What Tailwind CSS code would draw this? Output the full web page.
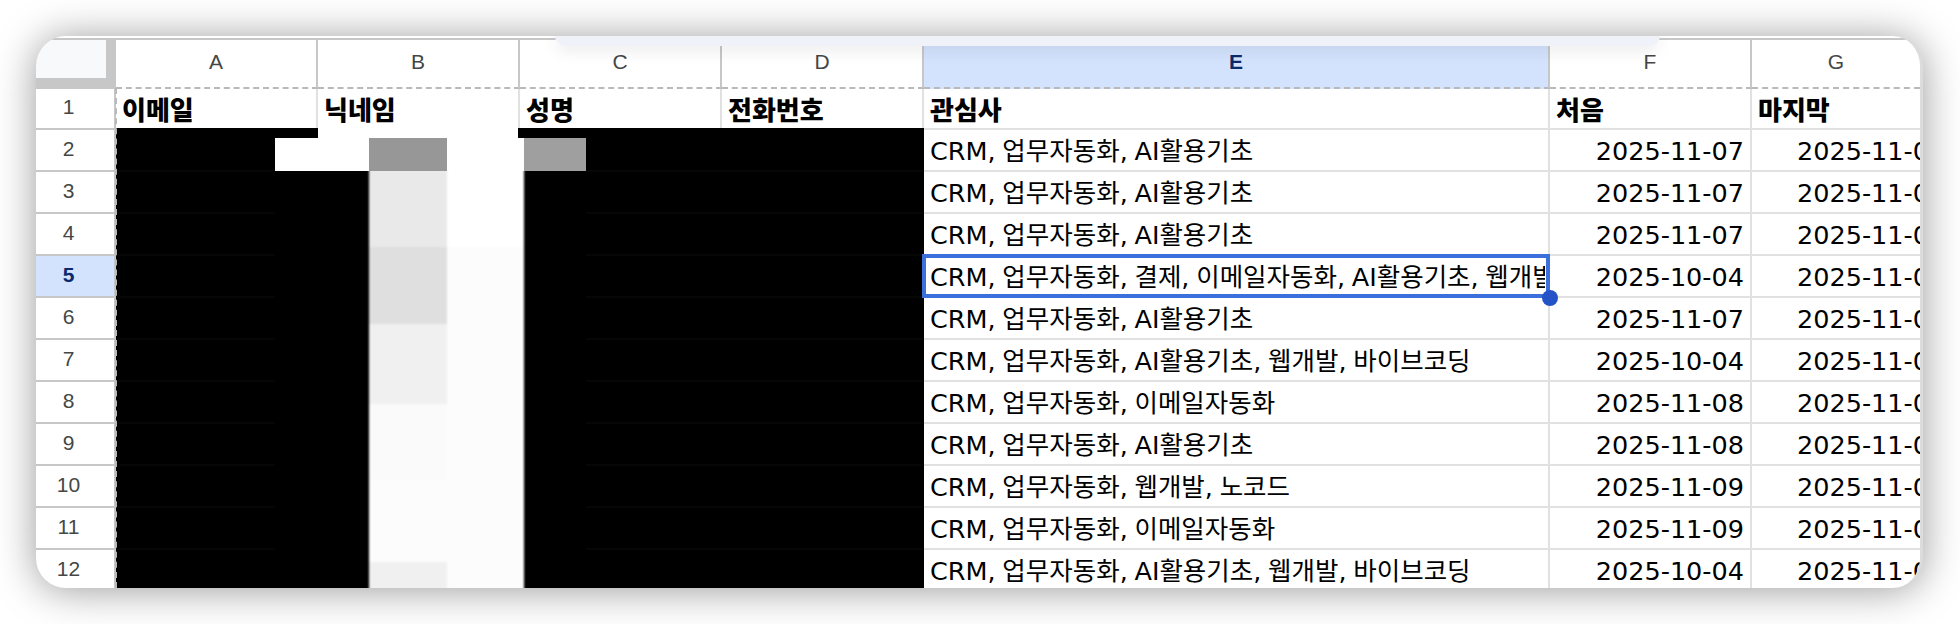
<!DOCTYPE html>
<html lang="ko">
<head>
<meta charset="UTF-8">
<title>Sheet</title>
<script src="https://cdn.jsdelivr.net/npm/@tailwindcss/browser@4"></script>
</head>
<body class="bg-white">
<div class="w-[1960px] h-[624px] pt-[36px] pl-[36px] overflow-hidden">
  <!-- Card -->
  <div class="relative w-[1887px] h-[552px] rounded-[30px] overflow-hidden bg-white shadow-[0_2px_40px_rgba(0,0,0,0.4)] border-r-[3px] border-[#dcdcdc] pt-[2px] font-['DejaVu_Sans','Noto_Sans_CJK_KR',sans-serif] text-[25.5px] [word-spacing:-1.4px] text-black">
    <div class="border-t-2 border-[#c7c7c7]">

      <!-- Column letters -->
      <div class="grid grid-cols-[80px_202px_202px_202px_202px_626px_202px_168px] h-[49px] text-[21px] text-[#444746] font-['Liberation_Sans',sans-serif] *:flex *:items-center *:justify-center *:border-r-2 *:border-[#c7c7c7] *:border-b-2 *:border-b-[#b9b9b9] *:border-dashed *:[border-right-style:solid] *:pb-[3px]">
        <div class="bg-[#c7c7c7]! border-b-0! p-0! items-start! justify-start! relative"><div class="w-[70px] h-[38px] bg-[#f8f9fa]"></div></div>
        <div>A</div>
        <div>B</div>
        <div>C</div>
        <div>D</div>
        <div class="bg-[#d3e3fd] font-bold text-[#0b2a6b]">E</div>
        <div>F</div>
        <div class="border-r-0!">G</div>
      </div>

      <!-- Row 1 -->
      <div class="grid grid-cols-[80px_202px_202px_202px_202px_626px_202px_168px] h-[41px] text-[26px] font-black font-['Noto_Sans_CJK_KR',sans-serif] *:flex *:items-center *:pl-[6px] *:border-r-2 *:border-b-2 *:border-[#e1e1e1]">
        <div class="justify-center pl-0! pr-[13px] pb-[3px] border-[#c7c7c7]! font-normal text-[21px] text-[#444746] font-['Liberation_Sans',sans-serif]">1</div>
        <div>이메일</div>
        <div>닉네임</div>
        <div>성명</div>
        <div>전화번호</div>
        <div>관심사</div>
        <div>처음</div>
        <div class="border-r-0!">마지막</div>
      </div>

      <!-- Data rows -->
      <div class="grid grid-cols-[80px_202px_202px_202px_202px_626px_202px_168px] h-[42px] *:flex *:items-center *:whitespace-nowrap *:border-r-2 *:border-b-2 *:border-[#e1e1e1]">
        <div class="justify-center pr-[13px] pb-[3px] border-[#c7c7c7]! text-[21px] text-[#444746] font-['Liberation_Sans',sans-serif]">2</div>
        <div></div><div></div><div></div><div></div>
        <div class="pl-[6px] pt-[2px]">CRM, 업무자동화, AI활용기초</div>
        <div class="justify-end pr-[6px] pt-[2px]">2025-11-07</div>
        <div class="pl-[45px] pt-[2px] overflow-hidden border-r-0!">2025-11-09</div>
      </div>
      <div class="grid grid-cols-[80px_202px_202px_202px_202px_626px_202px_168px] h-[42px] *:flex *:items-center *:whitespace-nowrap *:border-r-2 *:border-b-2 *:border-[#e1e1e1]">
        <div class="justify-center pr-[13px] pb-[3px] border-[#c7c7c7]! text-[21px] text-[#444746] font-['Liberation_Sans',sans-serif]">3</div>
        <div></div><div></div><div></div><div></div>
        <div class="pl-[6px] pt-[2px]">CRM, 업무자동화, AI활용기초</div>
        <div class="justify-end pr-[6px] pt-[2px]">2025-11-07</div>
        <div class="pl-[45px] pt-[2px] overflow-hidden border-r-0!">2025-11-09</div>
      </div>
      <div class="grid grid-cols-[80px_202px_202px_202px_202px_626px_202px_168px] h-[42px] *:flex *:items-center *:whitespace-nowrap *:border-r-2 *:border-b-2 *:border-[#e1e1e1]">
        <div class="justify-center pr-[13px] pb-[3px] border-[#c7c7c7]! text-[21px] text-[#444746] font-['Liberation_Sans',sans-serif]">4</div>
        <div></div><div></div><div></div><div></div>
        <div class="pl-[6px] pt-[2px]">CRM, 업무자동화, AI활용기초</div>
        <div class="justify-end pr-[6px] pt-[2px]">2025-11-07</div>
        <div class="pl-[45px] pt-[2px] overflow-hidden border-r-0!">2025-11-09</div>
      </div>
      <!-- Selected row -->
      <div class="grid grid-cols-[80px_202px_202px_202px_202px_626px_202px_168px] h-[42px] *:flex *:items-center *:whitespace-nowrap *:border-r-2 *:border-b-2 *:border-[#e1e1e1]">
        <div class="justify-center pr-[13px] pb-[3px] border-[#c7c7c7]! bg-[#d3e3fd] font-bold text-[21px] text-[#0b2a6b] font-['Liberation_Sans',sans-serif]">5</div>
        <div></div><div></div><div></div><div></div>
        <div class="relative z-20 pl-[6px] pt-[2px]">
          <span class="block overflow-hidden w-[615px]">CRM, 업무자동화, 결제, 이메일자동화, AI활용기초, 웹개발, 바이브코딩</span>
          <div class="absolute -top-[2px] -left-[2px] -right-[2px] -bottom-[2px] border-4 border-[#3b6fdc]"></div>
          <div class="absolute -right-[10px] -bottom-[10px] w-[16px] h-[16px] rounded-full bg-[#2453c7]"></div>
        </div>
        <div class="justify-end pr-[6px] pt-[2px]">2025-10-04</div>
        <div class="pl-[45px] pt-[2px] overflow-hidden border-r-0!">2025-11-09</div>
      </div>
      <div class="grid grid-cols-[80px_202px_202px_202px_202px_626px_202px_168px] h-[42px] *:flex *:items-center *:whitespace-nowrap *:border-r-2 *:border-b-2 *:border-[#e1e1e1]">
        <div class="justify-center pr-[13px] pb-[3px] border-[#c7c7c7]! text-[21px] text-[#444746] font-['Liberation_Sans',sans-serif]">6</div>
        <div></div><div></div><div></div><div></div>
        <div class="pl-[6px] pt-[2px]">CRM, 업무자동화, AI활용기초</div>
        <div class="justify-end pr-[6px] pt-[2px]">2025-11-07</div>
        <div class="pl-[45px] pt-[2px] overflow-hidden border-r-0!">2025-11-09</div>
      </div>
      <div class="grid grid-cols-[80px_202px_202px_202px_202px_626px_202px_168px] h-[42px] *:flex *:items-center *:whitespace-nowrap *:border-r-2 *:border-b-2 *:border-[#e1e1e1]">
        <div class="justify-center pr-[13px] pb-[3px] border-[#c7c7c7]! text-[21px] text-[#444746] font-['Liberation_Sans',sans-serif]">7</div>
        <div></div><div></div><div></div><div></div>
        <div class="pl-[6px] pt-[2px]">CRM, 업무자동화, AI활용기초, 웹개발, 바이브코딩</div>
        <div class="justify-end pr-[6px] pt-[2px]">2025-10-04</div>
        <div class="pl-[45px] pt-[2px] overflow-hidden border-r-0!">2025-11-09</div>
      </div>
      <div class="grid grid-cols-[80px_202px_202px_202px_202px_626px_202px_168px] h-[42px] *:flex *:items-center *:whitespace-nowrap *:border-r-2 *:border-b-2 *:border-[#e1e1e1]">
        <div class="justify-center pr-[13px] pb-[3px] border-[#c7c7c7]! text-[21px] text-[#444746] font-['Liberation_Sans',sans-serif]">8</div>
        <div></div><div></div><div></div><div></div>
        <div class="pl-[6px] pt-[2px]">CRM, 업무자동화, 이메일자동화</div>
        <div class="justify-end pr-[6px] pt-[2px]">2025-11-08</div>
        <div class="pl-[45px] pt-[2px] overflow-hidden border-r-0!">2025-11-09</div>
      </div>
      <div class="grid grid-cols-[80px_202px_202px_202px_202px_626px_202px_168px] h-[42px] *:flex *:items-center *:whitespace-nowrap *:border-r-2 *:border-b-2 *:border-[#e1e1e1]">
        <div class="justify-center pr-[13px] pb-[3px] border-[#c7c7c7]! text-[21px] text-[#444746] font-['Liberation_Sans',sans-serif]">9</div>
        <div></div><div></div><div></div><div></div>
        <div class="pl-[6px] pt-[2px]">CRM, 업무자동화, AI활용기초</div>
        <div class="justify-end pr-[6px] pt-[2px]">2025-11-08</div>
        <div class="pl-[45px] pt-[2px] overflow-hidden border-r-0!">2025-11-09</div>
      </div>
      <div class="grid grid-cols-[80px_202px_202px_202px_202px_626px_202px_168px] h-[42px] *:flex *:items-center *:whitespace-nowrap *:border-r-2 *:border-b-2 *:border-[#e1e1e1]">
        <div class="justify-center pr-[13px] pb-[3px] border-[#c7c7c7]! text-[21px] text-[#444746] font-['Liberation_Sans',sans-serif]">10</div>
        <div></div><div></div><div></div><div></div>
        <div class="pl-[6px] pt-[2px]">CRM, 업무자동화, 웹개발, 노코드</div>
        <div class="justify-end pr-[6px] pt-[2px]">2025-11-09</div>
        <div class="pl-[45px] pt-[2px] overflow-hidden border-r-0!">2025-11-09</div>
      </div>
      <div class="grid grid-cols-[80px_202px_202px_202px_202px_626px_202px_168px] h-[42px] *:flex *:items-center *:whitespace-nowrap *:border-r-2 *:border-b-2 *:border-[#e1e1e1]">
        <div class="justify-center pr-[13px] pb-[3px] border-[#c7c7c7]! text-[21px] text-[#444746] font-['Liberation_Sans',sans-serif]">11</div>
        <div></div><div></div><div></div><div></div>
        <div class="pl-[6px] pt-[2px]">CRM, 업무자동화, 이메일자동화</div>
        <div class="justify-end pr-[6px] pt-[2px]">2025-11-09</div>
        <div class="pl-[45px] pt-[2px] overflow-hidden border-r-0!">2025-11-09</div>
      </div>
      <div class="grid grid-cols-[80px_202px_202px_202px_202px_626px_202px_168px] h-[42px] *:flex *:items-center *:whitespace-nowrap *:border-r-2 *:border-b-2 *:border-[#e1e1e1]">
        <div class="justify-center pr-[13px] pb-[3px] border-[#c7c7c7]! text-[21px] text-[#444746] font-['Liberation_Sans',sans-serif]">12</div>
        <div></div><div></div><div></div><div></div>
        <div class="pl-[6px] pt-[2px]">CRM, 업무자동화, AI활용기초, 웹개발, 바이브코딩</div>
        <div class="justify-end pr-[6px] pt-[2px]">2025-10-04</div>
        <div class="pl-[45px] pt-[2px] overflow-hidden border-r-0!">2025-11-09</div>
      </div>
    </div>

    <!-- Redaction laid over columns A-D -->
    <div class="absolute z-10 left-[80px] top-[92px] w-[808px] h-[460px] bg-black overflow-hidden">
      <div class="absolute left-0 top-[2px] w-[159px] h-[458px] bg-[repeating-linear-gradient(to_bottom,#000_0,#000_40px,#060606_40px,#060606_42px)]"></div>
      <div class="absolute left-[470px] top-[2px] w-[338px] h-[458px] bg-[repeating-linear-gradient(to_bottom,#000_0,#000_40px,#060606_40px,#060606_42px)]"></div>
      <!-- blurred columns -->
      <div class="absolute left-[253px] top-[30px] w-[155px] h-[440px] flex blur-[1px]">
        <div class="w-[78px] flex flex-col">
          <div class="h-[89px] bg-[#e9e9e9]"></div>
          <div class="h-[77px] bg-[#dfdfdf]"></div>
          <div class="h-[80px] bg-[#f0f0f0]"></div>
          <div class="h-[76px] bg-[#fafafa]"></div>
          <div class="h-[82px] bg-[#fcfcfc]"></div>
          <div class="h-[36px] bg-[#f0f0f0]"></div>
        </div>
        <div class="w-[77px] flex flex-col">
          <div class="h-[89px] bg-white"></div>
          <div class="h-[351px] bg-[#fcfcfc]"></div>
        </div>
      </div>
      <!-- row 2 patches -->
      <div class="absolute left-[202px] top-0 w-[200px] h-[10px] bg-white"></div>
      <div class="absolute left-[159px] top-[10px] w-[94px] h-[33px] bg-white"></div>
      <div class="absolute left-[253px] top-[10px] w-[78px] h-[33px] bg-[#979797]"></div>
      <div class="absolute left-[331px] top-[10px] w-[77px] h-[33px] bg-white"></div>
      <div class="absolute left-[408px] top-[10px] w-[62px] h-[33px] bg-[#9f9f9f]"></div>
    </div>

    <!-- Dashed edge of the copied range -->
    <div class="absolute z-10 left-[79px] top-[52px] h-[500px] border-l-2 border-dashed border-[#b9b9b9]"></div>

    <!-- Floating bar at the top -->
    <div class="absolute z-30 left-[519px] top-0 w-[1105px] h-[10px] bg-[#eff3f9] rounded-b-[10px] shadow-[0_4px_16px_rgba(0,0,0,0.1)]"></div>
  </div>
</div>
</body>
</html>
